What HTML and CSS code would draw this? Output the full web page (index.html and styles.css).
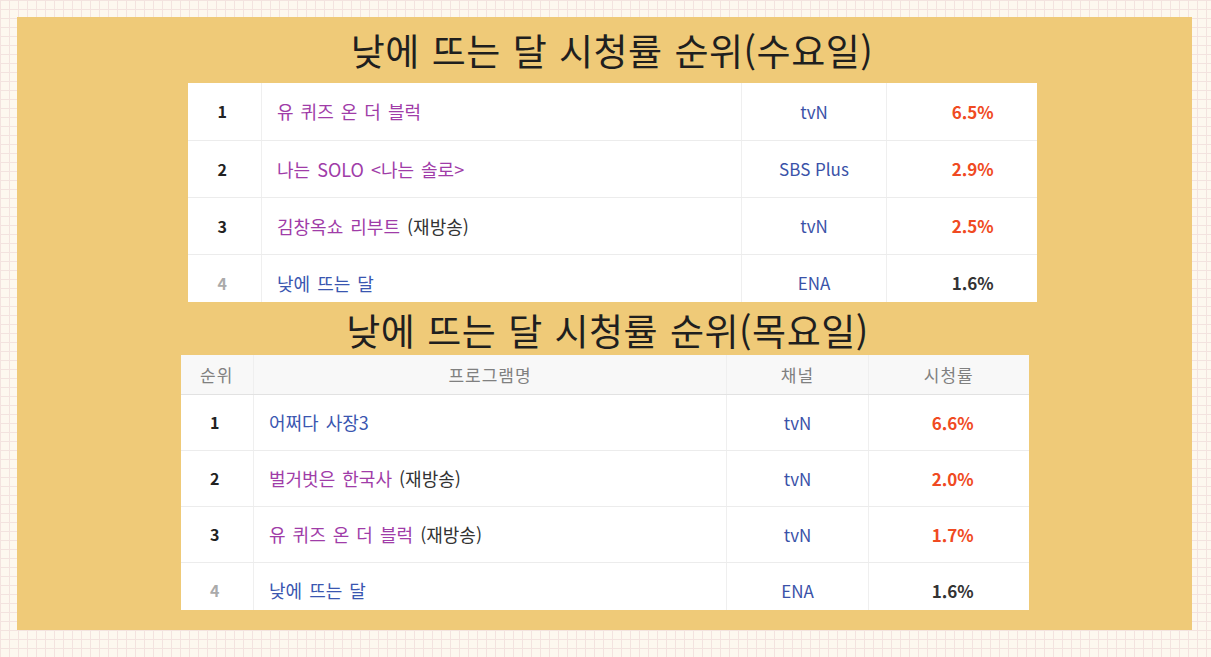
FILE: index.html
```html
<!DOCTYPE html>
<html lang="ko">
<head>
<meta charset="utf-8">
<title>낮에 뜨는 달 시청률 순위</title>
<link rel="stylesheet" href="styles.css">
</head>
<body>
<div class="panel">
  <section class="block block-wed">
    <h1 class="title">낮에 뜨는 달 시청률 순위(수요일)</h1>
    <div class="frame frame-wed">
      <table class="rank-table t-wed">
        <colgroup><col class="c-rank"><col class="c-name"><col class="c-ch"><col class="c-rate"></colgroup>
        <tbody>
          <tr><td class="rank">1</td><td class="name"><span class="purple">유 퀴즈 온 더 블럭</span></td><td class="ch">tvN</td><td class="rate hot">6.5%</td></tr>
          <tr><td class="rank">2</td><td class="name"><span class="purple">나는 SOLO &lt;나는 솔로&gt;</span></td><td class="ch">SBS Plus</td><td class="rate hot">2.9%</td></tr>
          <tr><td class="rank">3</td><td class="name"><span class="purple">김창옥쇼 리부트</span> <span class="re">(재방송)</span></td><td class="ch">tvN</td><td class="rate hot">2.5%</td></tr>
          <tr><td class="rank dim">4</td><td class="name"><span class="blue">낮에 뜨는 달</span></td><td class="ch">ENA</td><td class="rate">1.6%</td></tr>
        </tbody>
      </table>
    </div>
  </section>
  <section class="block block-thu">
    <h1 class="title">낮에 뜨는 달 시청률 순위(목요일)</h1>
    <div class="frame frame-thu">
      <table class="rank-table t-thu">
        <colgroup><col class="c-rank2"><col class="c-name2"><col class="c-ch2"><col class="c-rate2"></colgroup>
        <thead>
          <tr><th>순위</th><th>프로그램명</th><th>채널</th><th>시청률</th></tr>
        </thead>
        <tbody>
          <tr><td class="rank">1</td><td class="name"><span class="blue">어쩌다 사장3</span></td><td class="ch">tvN</td><td class="rate hot">6.6%</td></tr>
          <tr><td class="rank">2</td><td class="name"><span class="purple">벌거벗은 한국사</span> <span class="re">(재방송)</span></td><td class="ch">tvN</td><td class="rate hot">2.0%</td></tr>
          <tr><td class="rank">3</td><td class="name"><span class="purple">유 퀴즈 온 더 블럭</span> <span class="re">(재방송)</span></td><td class="ch">tvN</td><td class="rate hot">1.7%</td></tr>
          <tr><td class="rank dim">4</td><td class="name"><span class="blue">낮에 뜨는 달</span></td><td class="ch">ENA</td><td class="rate">1.6%</td></tr>
        </tbody>
      </table>
    </div>
  </section>
</div>
</body>
</html>
```

FILE: styles.css
```css
html, body {
  margin: 0;
  padding: 0;
}
body {
  width: 1211px;
  height: 657px;
  box-sizing: border-box;
  padding: 17px 0 0 17px;
  background-color: #fdf8ef;
  background-image:
    linear-gradient(#f3e3df 1px, transparent 1px),
    linear-gradient(90deg, #f3e3df 1px, transparent 1px);
  background-size: 9px 9px;
  font-family: "Noto Sans CJK KR", "Noto Sans", sans-serif;
  overflow: hidden;
}
.panel {
  width: 1175px;
  height: 613px;
  background: #efca78;
  display: flex;
  flex-direction: column;
  align-items: center;
  padding-top: 15px;
  box-sizing: border-box;
}
.block {
  display: flex;
  flex-direction: column;
  align-items: center;
}
.block-wed {
  margin-left: 15px;
}
.block-thu {
  margin-top: 10px;
}
.title {
  margin: 0;
  font-size: 37px;
  line-height: 36px;
  font-weight: 400;
  color: #1f1f1f;
  letter-spacing: 0.5px;
  word-spacing: 1px;
}
.block-wed .title {
  margin-bottom: 15px;
}
.block-thu .title {
  margin-bottom: 7px;
  margin-left: 6px;
}
.frame {
  background: #fff;
  overflow: hidden;
}
.frame-wed {
  width: 849px;
  height: 219px;
}
.frame-thu {
  width: 848px;
  height: 255px;
}
.rank-table {
  width: 100%;
  border-collapse: collapse;
  table-layout: fixed;
  font-size: 17px;
  color: #333;
}
.c-rank { width: 74px; }
.c-name { width: 480px; }
.c-ch { width: 145px; }
.c-rate { width: 150px; }
.c-rank2 { width: 73px; }
.c-name2 { width: 473px; }
.c-ch2 { width: 142px; }
.c-rate2 { width: 160px; }

.rank-table td,
.rank-table th {
  border-right: 1px solid #efefef;
  border-bottom: 1px solid #ececec;
  padding: 0;
  text-align: center;
  white-space: nowrap;
}
.rank-table td:last-child,
.rank-table th:last-child {
  border-right: none;
}
.rank-table tbody tr {
  height: 57px;
}
.t-thu tbody tr {
  height: 56px;
}
.t-thu thead tr {
  height: 39px;
}
.rank-table th {
  background: #f8f8f8;
  color: #808080;
  font-weight: 400;
  font-size: 17px;
  border-bottom: 1px solid #e2e2e2;
  letter-spacing: 1px;
}
.rank {
  font-weight: 700;
  font-size: 16px;
  color: #222;
}
.rank-table td.rank {
  padding-right: 4px;
}
.rank.dim {
  color: #aaa;
}
.rank-table td.name {
  text-align: left;
  padding-left: 15px;
  font-size: 18px;
  word-spacing: 2px;
}
.purple { color: #a03ca8; }
.blue { color: #3a56b0; }
.re { color: #333; word-spacing: 0; font-size: 18px; }
.ch {
  color: #3a52a8;
}
.rate {
  font-weight: 700;
  color: #333;
}
.rate.hot {
  color: #f04a22;
}
.t-wed .rate {
  padding-left: 22px;
}
.t-thu .rate {
  padding-left: 8px;
}
```
